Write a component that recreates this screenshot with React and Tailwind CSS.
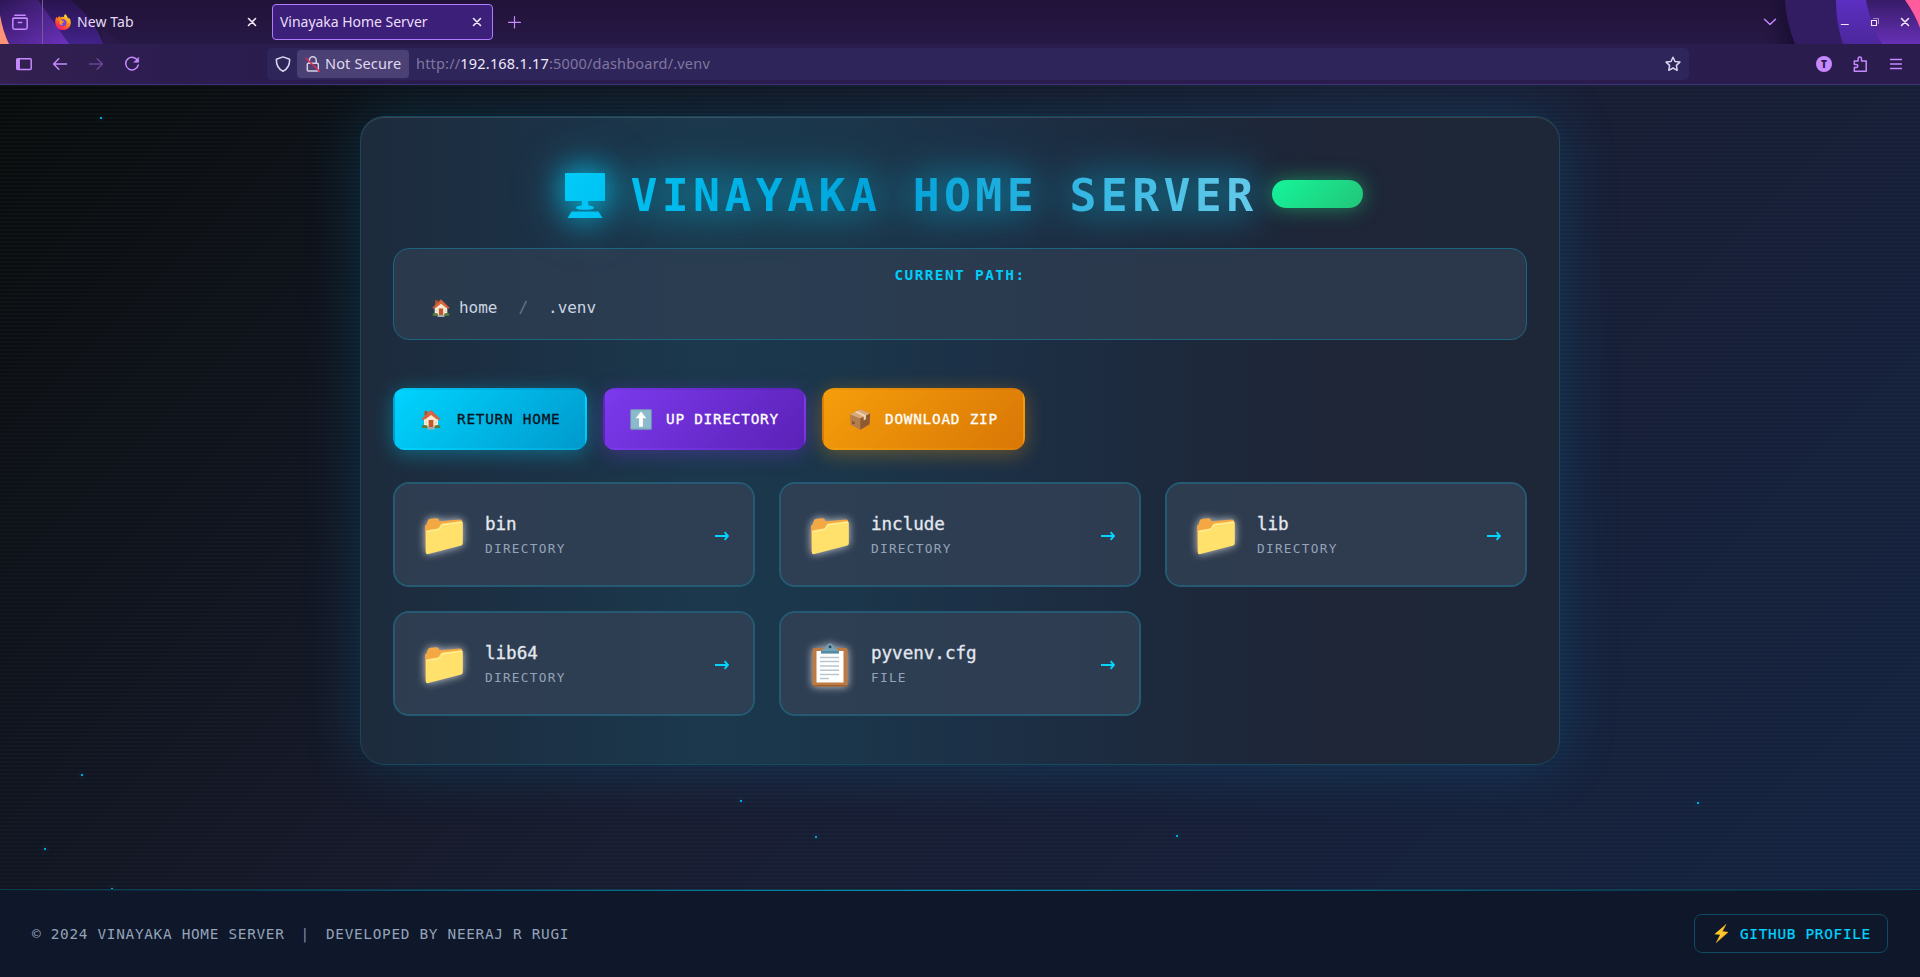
import React from "react";

const MONO = "font-['DejaVu_Sans_Mono',monospace]";
const UI = "font-['Noto_Sans',sans-serif]";

function FolderIcon() {
  return (
    <svg viewBox="0 0 40 38" className="h-[38px] w-10">
      <path d="M1.5 35.5 1 9.5Q1 8 2.5 7.600L3.500 4.500Q4 2 6.500 1.800L12.500 1.200Q14.500 1 15 3L15.500 4.200 36 2.500Q38 2.300 38.200 4.500V26L4 36Z" fill="#f3a843" />
      <path d="M2 35V14.500Q2 13.500 3.200 13.200L13.500 11.400Q15 11 15.600 9.500L16.400 8Q17 6.800 18.500 6.500L36.500 4.200Q38.800 4 38.800 6V26.500Q38.800 28 37.300 28.500L3.500 37.200Q2 37.500 2 35.800Z" fill="#ffe16c" />
      <path d="M2.300 14.800 13.800 12.700Q16 12.200 16.800 10L17.300 9Q17.800 8 19 7.800L38 5.300" fill="none" stroke="#fff3b0" strokeWidth=".8" />
    </svg>
  );
}

function ClipboardIcon() {
  return (
    <svg viewBox="0 0 40 46" className="h-[46px] w-10">
      <rect x="2.500" y="6" width="35" height="38.500" rx="2" fill="#bd7a42" />
      <path d="M3 43h34v.5q0 1-1.500 1h-31q-1.500 0-1.500-1z" fill="#9d5f30" />
      <path d="M6.500 9h27v31.500h-27z" fill="#fff" />
      <path d="M10 15.500h19M10 19.600h19M10 24h19M10 28.300h19M10 32.500h19M10 36.500h9" stroke="#b8c6ce" strokeWidth="1.500" />
      <path d="M11 11q0-4.500 5-5 1-4.500 4-4.500t4 4.500q5 .5 5 5z" fill="#72a3b8" />
      <path d="M11 9h18v2.600H11z" fill="#558ba2" />
      <circle cx="20" cy="4.800" r="1.500" fill="#2f4658" />
    </svg>
  );
}

function HouseIcon({ className }) {
  return (
    <svg viewBox="0 0 20 20" className={className}>
      <path d="M3 10v8h14v-8l-7-7z" fill="#f7ead3" />
      <path d="M3.500 1.500h3v5l-3 2.500z" fill="#b0532f" />
      <path d="M10 .4 19.600 9.600l-1.200 1.200L10 3.600l-8.400 7.200L.4 9.600z" fill="#d9603b" />
      <path d="M3 9.600 10 3.200l7 6.400-1 .4-6-4.600L4 10z" fill="#d9603b" />
      <path d="M7.600 10.500h4.800V18H7.600z" fill="#c1572f" />
      <path d="M4 11.800h2v2.400H4zM14 11.800h2v2.400h-2z" fill="#dfdcc8" />
      <path d="M.8 16.300q2.800-1.600 5.800 0v2.300H.8zM13.400 16.300q3-1.600 5.800 0v2.300h-5.800z" fill="#5b7d3c" />
      <path d="M6.600 17.800h6.800L14 20H6z" fill="#a6adb0" />
    </svg>
  );
}

function UpArrowIcon() {
  return (
    <svg viewBox="0 0 22 21" className="h-[21px] w-[22px]">
      <rect x=".3" y=".3" width="21.400" height="20.400" rx="1.200" fill="#78a9bb" />
      <rect x="1.200" y="1.200" width="19.600" height="18" rx="1" fill="#8bbaca" />
      <path d="M11 2.500 16.300 9.200h-3.400v8.600H9.100V9.200H5.700z" fill="#fff" />
    </svg>
  );
}

function PackageIcon() {
  return (
    <svg viewBox="0 0 22 21" className="h-[21px] w-[22px]">
      <path d="M1 5.200 11.500.3 21.200 4.500 20.500 15.300 11.300 20.800 1.600 15.700z" fill="#b57d4c" />
      <path d="M1 5.200 11.500.3 21.200 4.500 11.300 9.600z" fill="#d9a878" />
      <path d="M11.300 9.600 21.200 4.500 20.500 15.300 11.300 20.800z" fill="#8f5a30" />
      <path d="M5.800 3 8 2l9 4.300-.1 4-2.200 1.200V7.800z" fill="#ecd2ad" />
      <path d="M3 12.500l3 1.500M3 14l2 1" stroke="#5c3a20" strokeWidth=".8" />
    </svg>
  );
}

function Bolt() {
  return (
    <svg viewBox="0 0 14 19" className="h-[19px] w-3.5 shrink-0">
      <path d="M12 .2.300 10.200 6 10.700 2 18.800 13.900 8.300 8.300 7.500z" fill="#ffc928" />
      <path d="M12 .2 8.300 7.500 13.900 8.300 2 18.800" fill="none" stroke="#f59f1c" strokeWidth=".7" />
    </svg>
  );
}

function Monitor() {
  return (
    <svg viewBox="0 0 40 45" className="h-[45px] w-10 shrink-0">
      <defs>
        <linearGradient id="mon" x1="0" y1="0" x2="1" y2="1">
          <stop offset="0" stopColor="#02cbf8" />
          <stop offset="1" stopColor="#00c1f2" />
        </linearGradient>
      </defs>
      <path d="M.8 0h38.400q.8 0 .8.800v26.400q0 .8-.8.800H23.200v4.200l4.300 1.100q1.500.5 1.500 1.500 0 2-9 2t-9-2q0-1 1.500-1.500l4.300-1.100V28H.8q-.8 0-.8-.8V.8Q0 0 .8 0zM6.500 38.400h27L37.400 45H2.600z" fill="url(#mon)" />
    </svg>
  );
}

function Firefox() {
  return (
    <svg viewBox="0 0 16 16" className="h-4 w-4 shrink-0">
      <defs>
        <linearGradient id="fx" x1=".85" y1="0" x2=".2" y2="1">
          <stop offset="0" stopColor="#fff44f" />
          <stop offset=".4" stopColor="#ff980e" />
          <stop offset=".75" stopColor="#ff3647" />
          <stop offset="1" stopColor="#e31587" />
        </linearGradient>
      </defs>
      <path d="M10.300 0q-1.500 1-1.200 3Q6.500 2.300 5.600 3.600 4.500 3 4.300 2 3.200 2.700 2.700 4.200 1.800 3.600 1.600 2.700 0 5 .2 8.500A7.800 7.500 0 0 0 15.800 9q.2-4-2.600-5.400.2 1 0 1.500Q12.400 2 10.300 0z" fill="url(#fx)" />
      <circle cx="8" cy="8.800" r="3.500" fill="#7a3fe0" />
      <path d="M4.300 6.300q2-.8 3.500.6 1.600.2 1.200 1.200-.6.900-1.800.8-.6 1.300.9 2-2.400.5-3.600-1.200z" fill="#ff9a1b" />
    </svg>
  );
}

function Glyph({ children, className = "text-[#c689ff]", w = 1.5 }) {
  return (
    <svg viewBox="0 0 16 16" className={"h-4 w-4 shrink-0 " + className} fill="none" stroke="currentColor" strokeWidth={w} strokeLinecap="round" strokeLinejoin="round">
      {children}
    </svg>
  );
}

function CloseX() {
  return (
    <Glyph className="text-[#f0e8fa]" w={1.6}>
      <path d="M4.500 4.500l7 7M11.500 4.500l-7 7" />
    </Glyph>
  );
}

function TabStrip() {
  return (
    <div className="relative flex h-11 items-center bg-gradient-to-b from-[#201238] to-[#271946]">
      <svg className="absolute left-0 top-0 h-11 w-[140px]" viewBox="0 0 140 44">
        <defs>
          <linearGradient id="la" x1="0" y1="0" x2="1" y2="1">
            <stop offset="0" stopColor="#2e1758" />
            <stop offset="1" stopColor="#6c31bd" />
          </linearGradient>
          <linearGradient id="lb" x1="0" y1="0" x2="0" y2="1">
            <stop offset="0" stopColor="#2a1450" />
            <stop offset="1" stopColor="#42228a" />
          </linearGradient>
        </defs>
        <path d="M70 0Q94 18 103 44H60L36 0z" fill="url(#lb)" />
        <path d="M0 0H38L69 44H0z" fill="url(#la)" />
        <path d="M103 30q10 6 20 14h-20z" fill="#2b194c" />
        <path d="M0 15Q3 32 9 44H0z" fill="#ff9375" />
      </svg>
      <svg className="absolute right-0 top-0 h-11 w-[170px]" viewBox="0 0 170 44">
        <defs>
          <linearGradient id="ra" x1="0" y1="0" x2="0" y2="1">
            <stop offset="0" stopColor="#5c2fc2" />
            <stop offset="1" stopColor="#4c279c" />
          </linearGradient>
          <linearGradient id="rb" x1="0" y1="0" x2="0" y2="1">
            <stop offset="0" stopColor="#371b68" />
            <stop offset="1" stopColor="#6730b6" />
          </linearGradient>
          <linearGradient id="rc" x1="0" y1="0" x2="1" y2="0">
            <stop offset="0" stopColor="#201238" stopOpacity="0" />
            <stop offset="1" stopColor="#170c30" />
          </linearGradient>
        </defs>
        <path d="M12 0H37L46 44H12z" fill="url(#rc)" />
        <path d="M35 0Q36 22 45 44H100V0z" fill="#321d63" />
        <path d="M86 0Q86 24 93 44H140V0z" fill="url(#ra)" />
        <path d="M116 0Q120 24 132 44H170V0z" fill="url(#rb)" />
        <path d="M155 0Q165 14 170 28V0z" fill="#ff5c9d" />
      </svg>
      <div className={"relative flex h-11 w-full items-center text-[14px] text-[#e4daf6] " + UI}>
        <div className="flex h-11 w-[43px] items-center border-r border-[#745b96] pl-3">
          <Glyph>
            <path d="M2.800 1.200h10.400M1 4.200h14" />
            <rect x=".8" y="4.200" width="14.400" height="11" rx="1.600" />
            <path d="M6.300 8.500h3.400" />
          </Glyph>
        </div>
        <div className="ml-3 flex w-[205px] items-center">
          <Firefox />
          <span className="ml-1.5 flex-1 pb-px tracking-[0.1px]">New Tab</span>
          <CloseX />
        </div>
        <div className="ml-3 flex h-9 w-[221px] items-center rounded-[4px] border border-[#b07cff] bg-[#3c1f79] pl-[7px] pr-[7px] text-[#e9defb]">
          <span className="flex-1 whitespace-nowrap pb-px tracking-[-0.03px]">Vinayaka Home Server</span>
          <CloseX />
        </div>
        <Glyph className="ml-[14px] text-[#c689ff]" w={1.2}>
          <path d="M7.500 2.500v11.500M1.500 8.300h12" />
        </Glyph>
        <Glyph className="ml-auto mr-[59px] text-[#c689ff]" w={1.4}>
          <path d="M2.500 5.300 8 10.600l5.500-5.300" />
        </Glyph>
        <Glyph className="mr-[14px] text-[#f0e8fa]" w={1.2}>
          <path d="M4.300 10.500h7" />
        </Glyph>
        <Glyph className="mr-[14px] text-[#f0e8fa]" w={1.1}>
          <path d="M4.500 6.500h5v5h-5z" strokeLinejoin="miter" />
          <path d="M6.500 4.500h5v5" opacity=".5" />
        </Glyph>
        <div className="pr-[7px]">
          <CloseX />
        </div>
      </div>
    </div>
  );
}

function Toolbar() {
  return (
    <div className={"flex h-[41px] items-center border-b border-[#41337b] bg-[#2a1d4e] text-[14.500px] " + UI}>
      <div className="flex h-10 w-[267px] items-center gap-5 bg-gradient-to-r from-[#33204f] via-[#2d1d50] to-[#2a1d4e] pl-4">
        <Glyph>
          <rect x=".8" y="2.800" width="14.400" height="10.600" rx="1" />
          <path d="M1.300 3v10M2.200 3v10M3.200 3v10" />
        </Glyph>
        <Glyph>
          <path d="M14.500 8H1.700M6.800 2.800 1.600 8l5.200 5.200" />
        </Glyph>
        <Glyph className="text-[#6a4694]">
          <path d="M1.500 8h12.800M9.200 2.800 14.400 8l-5.200 5.200" />
        </Glyph>
        <Glyph>
          <path d="M13.800 5A6.300 6.300 0 1 0 14.200 9" />
          <path d="M14.700 1.500v4.800H9.900z" fill="currentColor" strokeWidth=".5" />
        </Glyph>
      </div>
      <div className="flex h-8 w-[1422px] items-center rounded-[5px] bg-[#2e255b] pl-2 text-[#e0d9f0]">
        <Glyph className="text-[#dcd5ee]">
          <path d="M8 .9 14.600 3.200Q15 12 8 15.200 1 12 1.400 3.200z" />
        </Glyph>
        <div className="ml-1.5 flex h-7 w-28 items-center rounded-[4px] bg-[#4b4175] pl-2">
          <Glyph className="text-[#d5cee6]">
            <rect x="2.300" y="7.200" width="11" height="7.800" rx="1" />
            <path d="M4.400 7V4.200a3.400 3.400 0 0 1 6.800 0V7" />
            <path d="M1 2.200 14.300 15.200" stroke="#e22850" />
          </Glyph>
          <span className="ml-1 whitespace-nowrap tracking-[0.15px]">Not Secure</span>
        </div>
        <span className="ml-[7px] flex-1 whitespace-nowrap tracking-[0.190px] text-[#81769f]">
          http://<span className="text-[#f0eafb]">192.168.1.17</span>:5000/dashboard/.venv
        </span>
        <Glyph className="mr-2 text-[#dcd5ee]">
          <path d="M8 1.200 10 5.500l4.900.6-3.500 3.300.8 4.900L8 12l-4.200 2.300.8-4.900L1.100 6.100 6 5.500z" />
        </Glyph>
      </div>
      <div className="flex flex-1 items-center justify-end gap-5 pr-4">
        <div className="flex h-4 w-4 items-center justify-center rounded-full bg-[#c689ff] text-[10px] font-black leading-none text-[#2a1d4e]">T</div>
        <Glyph>
          <path d="M2.300 15.200V11.500h2a1.500 1.500 0 0 0 0-3h-2V5h3.800V2.800a1.700 1.700 0 0 1 3.400 0V5h4.700v10.200z" />
        </Glyph>
        <Glyph w={1.3}>
          <path d="M2.500 3.500h11M2.500 8h11M2.500 12.500h11" />
        </Glyph>
      </div>
    </div>
  );
}

const PARTICLES = [
  [100, 32], [81, 689], [44, 763], [111, 803], [740, 715], [815, 751], [1176, 750], [1697, 717],
];

const ENTRIES = [
  { name: "bin", kind: "DIRECTORY" },
  { name: "include", kind: "DIRECTORY" },
  { name: "lib", kind: "DIRECTORY" },
  { name: "lib64", kind: "DIRECTORY" },
  { name: "pyvenv.cfg", kind: "FILE" },
];

function Entry({ name, kind }) {
  return (
    <div className="flex h-[105px] items-center rounded-2xl border-2 border-[#265a72] bg-[#334155cc] bg-clip-padding pl-7 pr-6 pt-0.5">
      <div className="flex w-[42px] justify-center drop-shadow-[0_0_4px_rgba(255,255,255,0.75)]">
        {kind === "FILE" ? <ClipboardIcon /> : <FolderIcon />}
      </div>
      <div className="ml-5 flex-1">
        <div className="text-[17.600px] leading-[25px] tracking-[-0.030px] text-[#e2e8f0] [-webkit-text-stroke:0.3px_#e2e8f0]">{name}</div>
        <div className="text-[12.800px] leading-[23px] tracking-[1.250px] text-[#94a3b8]">{kind}</div>
      </div>
      <svg viewBox="0 0 14 10" className="h-2.5 w-3.5 shrink-0" fill="none" stroke="#00d4ff" strokeWidth="1.900">
        <path d="M0 5h12.800M9.600 1.200 13 5 9.600 8.800" />
      </svg>
    </div>
  );
}

function ActionButton({ className, icon, children }) {
  return (
    <div className={"flex h-[62px] items-center rounded-xl border-2 border-transparent pt-px text-[14.400px] tracking-[0.740px] [-webkit-text-stroke:0.300px] " + className}>
      <div className="w-[22px]">{icon}</div>
      <span className="ml-3.5 whitespace-nowrap">{children}</span>
    </div>
  );
}

export default function App() {
  return (
    <div className="flex h-[977px] w-full flex-col overflow-hidden bg-[#0a0a0a]">
      <TabStrip />
      <Toolbar />
      <main className={"relative flex h-[804px] flex-col items-center overflow-hidden bg-[linear-gradient(135deg,#0a0a0a_0%,#1a1a2e_50%,#16213e_100%)] pt-[31px] " + MONO}>
        <div className="absolute inset-0 bg-[repeating-linear-gradient(0deg,transparent_0px,transparent_2px,rgba(0,212,255,0.04)_2px,rgba(0,212,255,0.04)_4px)]" />
        {PARTICLES.map(([x, y]) => (
          <div key={x} className="absolute h-0.5 w-0.5 bg-[#00a9d6] shadow-[0_0_6px_rgba(0,212,255,0.6)]" style={{ left: x, top: y }} />
        ))}
        <section className="relative flex h-[649px] w-[1200px] flex-col rounded-3xl border border-[#17485c] bg-[linear-gradient(90deg,#1d2b3c_0%,#1c3044_12%,#1b384c_28%,#1b364a_40%,#1c3046_52%,#1d293c_68%,#1e2638_80%,#1e2738_100%)] px-8 shadow-[0_0_60px_rgba(0,180,255,0.18),inset_0_1px_0_rgba(255,255,255,0.12)]">
          <header className="flex h-[131px] items-center justify-center pl-2 pt-[25px]">
            <div className="flex items-center pt-px [filter:drop-shadow(0_0_14px_rgba(0,212,255,0.6))_drop-shadow(0_0_20px_rgba(0,212,255,0.6))]">
              <Monitor />
            </div>
            <h1 className="ml-[25px] whitespace-nowrap bg-[linear-gradient(100deg,#00bfef_0%,#00a2d9_42%,#66cbea_100%)] bg-clip-text pt-0.5 text-[44.800px] font-bold leading-[60px] tracking-[4.390px] text-transparent [filter:drop-shadow(0_0_18px_rgba(0,212,255,0.45))_drop-shadow(0_0_22px_rgba(0,212,255,0.4))]">
              VINAYAKA HOME SERVER
            </h1>
            <div className="mb-[3px] ml-3.5 h-7 w-[91px] shrink-0 rounded-[14px] bg-[linear-gradient(135deg,#16f59a,#22c578)] shadow-[0_0_20px_rgba(34,230,130,0.5)]" />
          </header>
          <nav className="flex h-[92px] flex-col rounded-2xl border border-[#1d657f] bg-[#334155a6] pt-[15px]">
            <div className="text-center text-[14.400px] font-bold leading-[22px] tracking-[1.410px] text-[#00cdf8]">CURRENT PATH:</div>
            <div className="mt-2.5 flex items-center pl-[38px] text-[16px] leading-6 tracking-[-0.030px] text-[#cbd5e1]">
              <HouseIcon className="h-[18px] w-[18px]" />
              <span className="ml-[9px]">home</span>
              <span className="ml-[21px] text-[#64748b]">/</span>
              <span className="ml-5">.venv</span>
            </div>
          </nav>
          <div className="mt-12 flex gap-4">
            <ActionButton className="w-[194px] bg-[linear-gradient(135deg,#00d4ff,#0099cc)] pl-[26px] text-[#06121c] shadow-[0_4px_20px_rgba(0,212,255,0.35)]" icon={<HouseIcon className="h-[21px] w-5" />}>RETURN HOME</ActionButton>
            <ActionButton className="w-[203px] bg-[linear-gradient(135deg,#7c3aed,#5b21b6)] pl-[25px] text-white shadow-[0_4px_20px_rgba(124,58,237,0.35)]" icon={<UpArrowIcon />}>UP DIRECTORY</ActionButton>
            <ActionButton className="w-[203px] bg-[linear-gradient(135deg,#f59e0b,#d97706)] pl-[25px] text-white shadow-[0_4px_20px_rgba(245,158,11,0.35)]" icon={<PackageIcon />}>DOWNLOAD ZIP</ActionButton>
          </div>
          <div className="mt-8 grid grid-cols-3 gap-6">
            {ENTRIES.map((e) => (
              <Entry key={e.name} {...e} />
            ))}
          </div>
        </section>
      </main>
      <footer className={"flex h-[88px] flex-col border-t border-[#0c3d50] bg-[#0f172a] text-[14.400px] tracking-[0.690px] " + MONO}>
        <div className="h-px bg-[linear-gradient(90deg,transparent,#00b8de,transparent)] opacity-80" />
        <div className="flex flex-1 items-center pb-0.5 pl-8 pr-8 pt-px text-[#94a3b8]">
          <span className="pt-0.5">© 2024 VINAYAKA HOME SERVER</span>
          <span className="mx-4 pt-0.5 text-[#7c8ba1]">|</span>
          <span className="pt-0.5">DEVELOPED BY NEERAJ R RUGI</span>
          <div className="ml-auto flex h-[39px] w-[194px] items-center rounded-lg border border-[#0d4c62] pl-[19px] text-[#00d4ff]">
            <Bolt />
            <span className="ml-3 whitespace-nowrap pt-0.5 [-webkit-text-stroke:0.200px]">GITHUB PROFILE</span>
          </div>
        </div>
      </footer>
    </div>
  );
}
